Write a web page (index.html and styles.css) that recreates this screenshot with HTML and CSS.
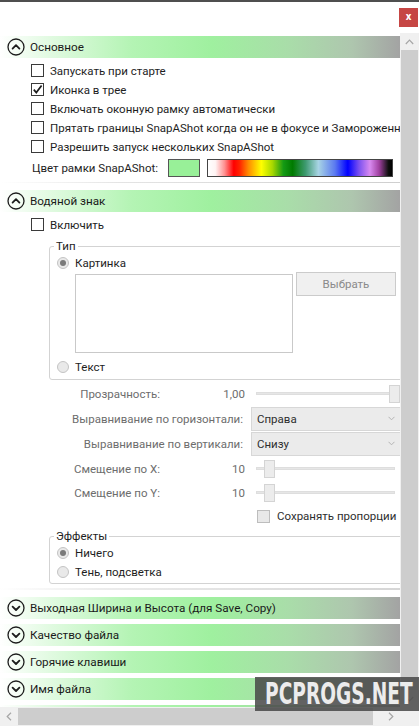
FILE: index.html
```html
<!DOCTYPE html>
<html lang="ru">
<head>
<meta charset="utf-8">
<title>SnapAShot — настройки</title>
<link rel="stylesheet" href="styles.css">
</head>
<body>
<div class="window">
  <div class="titlebar">
    <button class="close" type="button">x</button>
  </div>
  <div class="main">
    <div class="content">

      <section class="section">
        <div class="hdr">
          <svg class="hdr-icon" width="18" height="18" viewBox="0 0 18 18"><circle cx="9" cy="9" r="8" fill="none" stroke="#1c1c1c" stroke-width="1.3"/><path d="M5.6 10.6 L9 7.2 L12.4 10.6" fill="none" stroke="#1c1c1c" stroke-width="1.8" stroke-linecap="round" stroke-linejoin="round"/></svg>
          <span>Основное</span>
        </div>
        <div class="body-general">
          <div class="chk"><span class="box"></span><span>Запускать при старте</span></div>
          <div class="chk"><span class="box"><svg width="11" height="11" viewBox="0 0 11 11"><path d="M1.8 5.6 L4.3 8.6 L9.6 1.6" fill="none" stroke="#1c1c1c" stroke-width="1.7"/></svg></span><span>Иконка в трее</span></div>
          <div class="chk"><span class="box"></span><span>Включать оконную рамку автоматически</span></div>
          <div class="chk"><span class="box"></span><span>Прятать границы SnapAShot когда он не в фокусе и Замороженный</span></div>
          <div class="chk"><span class="box"></span><span>Разрешить запуск нескольких SnapAShot</span></div>
          <div class="color-row">
            <span class="color-label">Цвет рамки SnapAShot:</span>
            <span class="swatch"></span>
            <span class="spectrum"></span>
          </div>
        </div>
        <div class="sep sep-thin"></div>
      </section>

      <section class="section">
        <div class="hdr hdr-next">
          <svg class="hdr-icon" width="18" height="18" viewBox="0 0 18 18"><circle cx="9" cy="9" r="8" fill="none" stroke="#1c1c1c" stroke-width="1.3"/><path d="M5.6 10.6 L9 7.2 L12.4 10.6" fill="none" stroke="#1c1c1c" stroke-width="1.8" stroke-linecap="round" stroke-linejoin="round"/></svg>
          <span>Водяной знак</span>
        </div>
        <div class="body-watermark">
          <div class="chk"><span class="box"></span><span>Включить</span></div>

          <fieldset class="group group-type">
            <legend>Тип</legend>
            <div class="radio"><span class="dot on"></span><span>Картинка</span></div>
            <div class="image-row">
              <div class="image-box"></div>
              <button class="pick" type="button">Выбрать</button>
            </div>
            <div class="radio radio-text"><span class="dot"></span><span>Текст</span></div>
          </fieldset>

          <div class="form">
            <span class="lbl">Прозрачность:</span>
            <span class="val">1,00</span>
            <div class="slider"><span class="track"></span><span class="thumb thumb-max"></span></div>

            <span class="lbl lbl-wide">Выравнивание по горизонтали:</span>
            <div class="combo"><span class="combo-text">Справа</span><svg width="7" height="5" viewBox="0 0 7 5"><path d="M0.5 0.8 L3.5 3.8 L6.5 0.8" fill="none" stroke="#b4b4b4" stroke-width="1"/></svg></div>

            <span class="lbl lbl-wide">Выравнивание по вертикали:</span>
            <div class="combo"><span class="combo-text">Снизу</span><svg width="7" height="5" viewBox="0 0 7 5"><path d="M0.5 0.8 L3.5 3.8 L6.5 0.8" fill="none" stroke="#b4b4b4" stroke-width="1"/></svg></div>

            <span class="lbl">Смещение по X:</span>
            <span class="val">10</span>
            <div class="slider"><span class="track"></span><span class="thumb thumb-low"></span></div>

            <span class="lbl">Смещение по Y:</span>
            <span class="val">10</span>
            <div class="slider"><span class="track"></span><span class="thumb thumb-low"></span></div>

            <div class="chk chk-off keep"><span class="box"></span><span>Сохранять пропорции</span></div>
          </div>

          <fieldset class="group group-fx">
            <legend>Эффекты</legend>
            <div class="radio"><span class="dot on"></span><span>Ничего</span></div>
            <div class="radio"><span class="dot"></span><span>Тень, подсветка</span></div>
          </fieldset>
        </div>
        <div class="sep sep-soft"></div>
      </section>

      <section class="section collapsed">
        <div class="hdr hdr-next">
          <svg class="hdr-icon" width="18" height="18" viewBox="0 0 18 18"><circle cx="9" cy="9" r="8" fill="none" stroke="#1c1c1c" stroke-width="1.3"/><path d="M5.6 7.6 L9 11 L12.4 7.6" fill="none" stroke="#1c1c1c" stroke-width="1.8" stroke-linecap="round" stroke-linejoin="round"/></svg>
          <span>Выходная Ширина и Высота (для Save, Copy)</span>
        </div>
      </section>
      <section class="section collapsed">
        <div class="hdr hdr-gap">
          <svg class="hdr-icon" width="18" height="18" viewBox="0 0 18 18"><circle cx="9" cy="9" r="8" fill="none" stroke="#1c1c1c" stroke-width="1.3"/><path d="M5.6 7.6 L9 11 L12.4 7.6" fill="none" stroke="#1c1c1c" stroke-width="1.8" stroke-linecap="round" stroke-linejoin="round"/></svg>
          <span>Качество файла</span>
        </div>
      </section>
      <section class="section collapsed">
        <div class="hdr hdr-gap">
          <svg class="hdr-icon" width="18" height="18" viewBox="0 0 18 18"><circle cx="9" cy="9" r="8" fill="none" stroke="#1c1c1c" stroke-width="1.3"/><path d="M5.6 7.6 L9 11 L12.4 7.6" fill="none" stroke="#1c1c1c" stroke-width="1.8" stroke-linecap="round" stroke-linejoin="round"/></svg>
          <span>Горячие клавиши</span>
        </div>
      </section>
      <section class="section collapsed">
        <div class="hdr hdr-gap">
          <svg class="hdr-icon" width="18" height="18" viewBox="0 0 18 18"><circle cx="9" cy="9" r="8" fill="none" stroke="#1c1c1c" stroke-width="1.3"/><path d="M5.6 7.6 L9 11 L12.4 7.6" fill="none" stroke="#1c1c1c" stroke-width="1.8" stroke-linecap="round" stroke-linejoin="round"/></svg>
          <span>Имя файла</span>
        </div>
      </section>
      <section class="section collapsed">
        <div class="hdr hdr-gap">
          <svg class="hdr-icon" width="18" height="18" viewBox="0 0 18 18"><circle cx="9" cy="9" r="8" fill="none" stroke="#1c1c1c" stroke-width="1.3"/><path d="M5.6 7.6 L9 11 L12.4 7.6" fill="none" stroke="#1c1c1c" stroke-width="1.8" stroke-linecap="round" stroke-linejoin="round"/></svg>
        </div>
      </section>

    </div>
    <div class="vscroll">
      <div class="arrow"><svg width="9" height="6" viewBox="0 0 9 6"><path d="M0.8 5 L4.5 1.2 L8.2 5" fill="none" stroke="#a6a6a6" stroke-width="1.2"/></svg></div>
      <div class="vthumb"></div>
      <div class="arrow"><svg width="9" height="6" viewBox="0 0 9 6"><path d="M0.8 1 L4.5 4.8 L8.2 1" fill="none" stroke="#a6a6a6" stroke-width="1.2"/></svg></div>
    </div>
  </div>
  <div class="hscroll">
    <div class="harrow"><svg width="6" height="9" viewBox="0 0 6 9"><path d="M5 0.8 L1.2 4.5 L5 8.2" fill="none" stroke="#a6a6a6" stroke-width="1.2"/></svg></div>
    <div class="hthumb"></div>
    <div class="hrest"><svg width="6" height="9" viewBox="0 0 6 9"><path d="M1 0.8 L4.8 4.5 L1 8.2" fill="none" stroke="#a6a6a6" stroke-width="1.2"/></svg></div>
    <div class="corner"></div>
  </div>
  <div class="watermark"><span>PCPROGS.NET</span></div>
</div>
</body>
</html>
```

FILE: styles.css
```css
* {
  box-sizing: border-box;
}

html, body {
  margin: 0;
  padding: 0;
  background: #ffffff;
}

body {
  font-family: Roboto, "Open Sans", sans-serif;
  font-size: 11.5px;
  color: #1e1e1e;
  white-space: nowrap;
}

.window {
  position: relative;
  width: 419px;
  height: 726px;
  display: flex;
  flex-direction: column;
  overflow: hidden;
  background: #ffffff;
}

/* title bar */
.titlebar {
  height: 33px;
  flex: none;
  border-top: 2px solid #4f4f4f;
  display: flex;
  justify-content: flex-end;
  align-items: flex-start;
  padding-top: 6px;
  padding-right: 1px;
}

.close {
  width: 19px;
  height: 19px;
  margin: 0;
  padding: 0 0 2px 0;
  border: none;
  background: #c64644;
  color: #ffffff;
  font-family: Roboto, sans-serif;
  font-size: 11px;
  font-weight: 700;
  line-height: 17px;
}

/* main area */
.main {
  height: 674px;
  flex: none;
  display: flex;
}

.content {
  width: 400px;
  flex: none;
  overflow: hidden;
  padding-top: 3px;
}

/* section headers */
.hdr {
  height: 22px;
  display: flex;
  align-items: center;
  gap: 5px;
  padding-left: 7px;
  background: linear-gradient(90deg, #ffffff 0%, #e0fae0 13%, #b4f4b4 33%, #9ff09f 53%, #a9dda9 72%, #aec6ae 88%, #a3a3a3 100%);
  color: #1a1a1a;
  font-size: 11.7px;
}

.hdr-icon {
  flex: none;
}

.hdr-next {
  margin-top: 7px;
}

.hdr-gap {
  margin-top: 5px;
}

/* checkboxes */
.chk {
  height: 19px;
  display: flex;
  align-items: center;
  gap: 6px;
  padding-left: 31px;
}

.box {
  width: 13px;
  height: 13px;
  flex: none;
  border: 1px solid #3a3a3a;
  background: #ffffff;
  display: flex;
  align-items: center;
  justify-content: center;
}

.body-general {
  padding-top: 3px;
}

.color-row {
  height: 23px;
  display: flex;
  align-items: center;
  padding-left: 32px;
}

.color-label {
  width: 136px;
  flex: none;
}

.swatch {
  width: 32px;
  height: 18px;
  flex: none;
  border: 1px solid #555555;
  background: #98f098;
}

.spectrum {
  width: 186px;
  height: 18px;
  flex: none;
  margin-left: 7px;
  border: 1px solid #444444;
  background: linear-gradient(90deg, #ffffff 0%, #fff4f4 4%, #ff9090 9%, #ff0000 14%, #ff2000 17%, #ff8c00 22%, #ffff00 29%, #a8d800 35%, #149a14 41%, #007a00 46%, #3e9a70 53%, #a8d4e4 60%, #5b7af0 69%, #0000ff 76%, #7a50f0 82%, #d88af0 88%, #a040a0 93%, #101010 98%, #000000 100%);
}

.sep {
  margin-top: 3px;
}

.sep-thin {
  height: 1px;
  background: linear-gradient(90deg, #ffffff 0%, #e4e4e4 30%, #cfcfcf 100%);
}

.sep-soft {
  margin-top: 4px;
  height: 2px;
  background: linear-gradient(90deg, #ffffff 0%, #ececec 25%, #d6d6d6 100%);
}

/* watermark section */
.body-watermark {
  padding-top: 3px;
}

.group {
  margin: 0 0 0 49px;
  width: 381px;
  padding: 0 0 3px 0;
  border: 1px solid #d3d3d3;
  border-radius: 3px;
}

.group legend {
  margin-left: 4px;
  padding: 0 2px;
  line-height: 14px;
  font-size: 11.5px;
  color: #1e1e1e;
}

.group-type {
  margin-top: 5px;
}

.group-fx {
  margin-top: 2px;
  padding-bottom: 2px;
}

.radio {
  height: 19px;
  display: flex;
  align-items: center;
  gap: 6px;
  padding-left: 7px;
}

.dot {
  width: 12px;
  height: 12px;
  flex: none;
  border-radius: 50%;
  border: 1px solid #c4c4c4;
  background: #e9e9e9;
  display: flex;
  align-items: center;
  justify-content: center;
}

.dot.on::after {
  content: "";
  width: 6px;
  height: 6px;
  border-radius: 50%;
  background: #7b7b7b;
}

.image-row {
  display: flex;
  align-items: flex-start;
}

.image-box {
  width: 218px;
  height: 79px;
  margin: 2px 0 0 25px;
  border: 1px solid #c9c9c9;
  background: #ffffff;
}

.pick {
  width: 100px;
  height: 24px;
  margin: 0 0 0 3px;
  padding: 0;
  border: 1px solid #cbcbcb;
  background: #f0f0f0;
  color: #8a8a8a;
  font-family: Roboto, sans-serif;
  font-size: 11.5px;
}

.radio-text {
  margin-top: 4px;
}

/* form grid */
.form {
  margin: 2px 0 0 71px;
  display: grid;
  grid-template-columns: 89px 91px 170px;
  grid-template-rows: 24px 25px 25px 25px 24px 22px;
  align-items: center;
  color: #6d6d6d;
}

.lbl {
  text-align: right;
}

.lbl-wide {
  grid-column: 1 / 3;
  padding-right: 8px;
}

.val {
  text-align: right;
  padding-right: 6px;
}

.slider {
  position: relative;
  width: 149px;
  height: 18px;
}

.track {
  position: absolute;
  left: 5px;
  top: 7px;
  width: 139px;
  height: 3px;
  background: #e6e6e6;
  border: 1px solid #dedede;
}

.thumb {
  position: absolute;
  top: 0;
  width: 11px;
  height: 18px;
  background: #ececec;
  border: 1px solid #d4d4d4;
}

.thumb-max {
  left: 138px;
}

.thumb-low {
  left: 13px;
}

.combo {
  width: 170px;
  height: 24px;
  display: flex;
  align-items: center;
  padding-left: 5px;
  border: 1px solid #d7d7d7;
  background: #ebebeb;
  color: #2e2e2e;
}

.combo-text {
  width: 131px;
  flex: none;
}

.keep {
  grid-column: 3;
  padding-left: 6px;
  gap: 7px;
  color: #2e2e2e;
}

.chk-off .box {
  border-color: #bdbdbd;
  background: #e8e8e8;
}

/* scrollbars */
.vscroll {
  width: 19px;
  flex: none;
  display: flex;
  flex-direction: column;
  background: #f0f0f0;
}

.arrow {
  height: 17px;
  flex: none;
  display: flex;
  align-items: center;
  justify-content: center;
}

.vthumb {
  flex: 1;
  margin: 0 1px;
  background: #cdcdcd;
}

.hscroll {
  height: 19px;
  flex: none;
  display: flex;
  background: #f0f0f0;
}

.harrow {
  width: 18px;
  flex: none;
  display: flex;
  align-items: center;
  justify-content: center;
}

.hthumb {
  width: 355px;
  flex: none;
  margin: 1px 0;
  background: #cdcdcd;
}

.hrest {
  flex: 1;
  display: flex;
  align-items: center;
  justify-content: flex-end;
  padding-right: 6px;
}

.corner {
  width: 19px;
  flex: none;
  background: #f0f0f0;
}

/* site watermark overlay */
.watermark {
  position: absolute;
  left: 255px;
  top: 677px;
  width: 164px;
  height: 34px;
  background: rgba(72, 72, 72, 0.86);
  color: #ececec;
  overflow: hidden;
  padding-left: 10px;
}

.watermark span {
  display: inline-block;
  font-family: "DejaVu Sans", sans-serif;
  font-weight: 700;
  font-size: 30px;
  line-height: 34px;
  transform: scaleX(0.62);
  transform-origin: left center;
}
```
